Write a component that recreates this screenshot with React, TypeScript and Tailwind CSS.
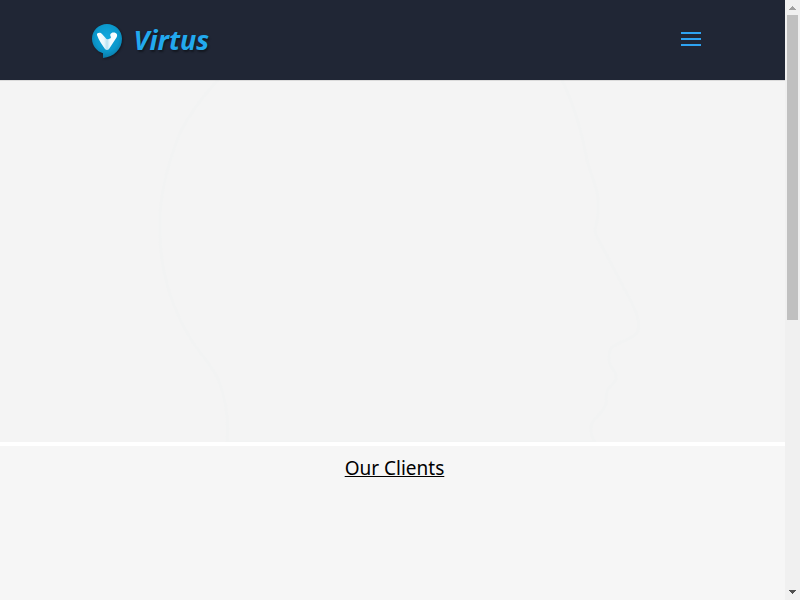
import React from "react";

function Logo() {
  return (
    <a href="#" className="flex items-center gap-3 text-[#22a9ee]">
      <svg viewBox="0 0 30 36" className="h-9 w-[30px] overflow-visible drop-shadow-[1px_1px_1px_rgba(0,0,0,0.35)]" aria-hidden="true">
        <defs>
          <radialGradient id="bubble" cx="0.5" cy="0.4" r="0.6">
            <stop offset="0" stopColor="#12a9de" />
            <stop offset="0.65" stopColor="#0b98cc" />
            <stop offset="1" stopColor="#0a7ba8" />
          </radialGradient>
          <linearGradient id="mark" x1="0" x2="1">
            <stop offset="0" stopColor="#ffffff" />
            <stop offset="0.35" stopColor="#eaf8fd" />
            <stop offset="0.5" stopColor="#b9e3f3" />
            <stop offset="0.65" stopColor="#f2fbff" />
            <stop offset="1" stopColor="#ffffff" />
          </linearGradient>
        </defs>
        <path d="M15 2C6.700 2 0 8.500 0 16.800C0 23.500 4.500 29.500 11 31.200L11 36C22 35 30 27 30 16.800C30 8.500 23.300 2 15 2Z" fill="url(#bubble)" />
        <path d="M5 13C4.500 10.500 8.500 10 10 12L14.500 17C16 17.500 19.600 16.500 18.800 14.700C17.500 13 18.500 10.500 21.500 10.500C24.800 10.500 26 13 24.500 15.500L17 27C16 28.300 14 28.300 13 27C10 22.500 7 18.500 5 13Z" fill="url(#mark)" />
      </svg>
      <span className="font-['Noto_Sans',sans-serif] text-[27px] leading-8 font-bold italic [text-shadow:1px_2px_2px_rgba(0,0,0,0.4)]">Virtus</span>
    </a>
  );
}

function Header() {
  return (
    <header className="relative h-20 bg-[#202635] shadow-[0_1px_0_rgba(0,0,0,0.1)]">
      <div className="mx-auto flex h-full w-4/5 items-center justify-between pr-1.5 pl-[13px]">
        <Logo />
        <button type="button" aria-label="Menu" className="flex w-5 flex-col gap-1 pb-0.5">
          <span className="h-0.5 w-5 bg-[#2ea3f2]" />
          <span className="h-0.5 w-5 bg-[#2ea3f2]" />
          <span className="h-0.5 w-5 bg-[#2ea3f2]" />
        </button>
      </div>
    </header>
  );
}

function Hero() {
  return (
    <section className="h-[362px] bg-[#f4f4f4]">
      <svg viewBox="0 0 785 362" preserveAspectRatio="xMidYMid slice" className="h-full w-full" aria-hidden="true">
        <path
          d="M218 0Q192 28 180 53Q163 95 160 133V155C161 203 177 235 190 258C202 276 212 286 218 299Q230 328 227 362H595C591 356 590 350 592 343C597 335 605 331 606 323C607 317 605 314 608 309C612 304 617 302 616 295C615 289 609 287 609 280C609 275 609 270 612 267C620 262 628 260 635 255C640 251 639 245 638 240C637 231 631 221 626 212L604 170C600 162 595 156 595 150C596 144 598 139 598 133V120C598 107 590 94 587 80Q579 35 562 0"
          fill="#f4f4f4"
          stroke="#f2f3f3"
          strokeWidth="3"
        />
      </svg>
    </section>
  );
}

function ScrollRail() {
  return (
    <div className="flex w-[15px] shrink-0 flex-col items-center bg-[#f0f0f0]" aria-hidden="true">
      <svg viewBox="0 0 15 15" className="h-[15px] w-[15px]" shapeRendering="crispEdges">
        <path d="M7 6h1v1h1v1h1v1h1v1H4V9h1V8h1V7h1z" fill="#a0a0a0" />
      </svg>
      <div className="flex w-full flex-1 px-0.5">
        <div className="h-[305px] w-[11px] bg-[#c0c0c0]" />
      </div>
      <svg viewBox="0 0 15 15" className="h-[15px] w-[15px]" shapeRendering="crispEdges">
        <path d="M4 5h7v1h-1v1H9v1H8v1H7V8H6V7H5V6H4z" fill="#505050" />
      </svg>
    </div>
  );
}

export default function App() {
  return (
    <div className="flex h-screen overflow-hidden bg-[#f6f6f6] text-black">
      <div className="min-w-0 flex-1">
        <Header />
        <main>
          <Hero />
          <section className="border-t-4 border-white px-4 pt-2 text-center">
            <h2 className="pl-1 font-['Noto_Sans',sans-serif] text-[19px] leading-7 font-normal underline">Our Clients</h2>
          </section>
        </main>
      </div>
      <ScrollRail />
    </div>
  );
}
